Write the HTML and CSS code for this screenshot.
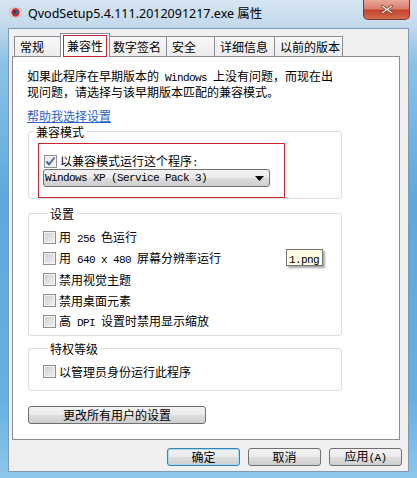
FILE: index.html
```html
<!DOCTYPE html>
<html>
<head>
<meta charset="UTF-8">
<title>QvodSetup5.4.111.2012091217.exe 属性</title>
<link rel="stylesheet" href="styles.css">
</head>
<body>

<div class="window">
	<div class="titlebar">
		<svg class="appicon" width="15" height="14" viewBox="0 0 15 14">
			<path d="M2 3 Q7 0 13 3 L13 10 Q7 13 2 10 Z" fill="#f4f0ee" stroke="#b9b2ae" stroke-width="0.8"/>
			<circle cx="7.5" cy="6.5" r="4.2" fill="#d8242c"/>
			<circle cx="7.5" cy="6.5" r="2.3" fill="#1d5fa8"/>
			<circle cx="7" cy="6" r="0.9" fill="#0b1c3a"/>
		</svg>
		<div class="title">QvodSetup5.4.111.2012091217.exe 属性</div>
		<div class="close">
			<svg width="14" height="11" viewBox="0 0 14 11">
				<path d="M2 1 L7 4.3 L12 1 L13 2.4 L8.8 5.5 L13 8.6 L12 10 L7 6.7 L2 10 L1 8.6 L5.2 5.5 L1 2.4 Z" fill="#fff" stroke="#6b2a20" stroke-width="0.8"/>
			</svg>
		</div>
	</div>

	<div class="client">
		<div class="tabs">
			<div class="tab t1">常规</div>
			<div class="tab active"><span class="mark">兼容性</span></div>
			<div class="tab t3">数字签名</div>
			<div class="tab t4">安全</div>
			<div class="tab t5">详细信息</div>
			<div class="tab t6">以前的版本</div>
		</div>

		<div class="panel">
			<p class="intro">如果此程序在早期版本的<span class="en"> Windows </span>上没有问题，而现在出<br>现问题，请选择与该早期版本匹配的兼容模式。</p>
			<a class="help">帮助我选择设置</a>

			<fieldset class="group g1">
				<legend>兼容模式</legend>
				<div class="redbox">
					<div class="row">
						<span class="check checked">
							<svg width="11" height="11" viewBox="0 0 11 11"><path d="M1.5 5.5 L4 8.5 L9.5 1.5" fill="none" stroke="#4d6aa6" stroke-width="2"/></svg>
						</span>
						<span>以兼容模式运行这个程序<span class="en">:</span></span>
					</div>
					<div class="combo">
						<span class="en">Windows XP (Service Pack 3)</span>
						<svg class="arrow" width="9" height="5" viewBox="0 0 9 5"><path d="M0 0 L9 0 L4.5 5 Z" fill="#000"/></svg>
					</div>
				</div>
			</fieldset>

			<fieldset class="group g2">
				<legend>设置</legend>
				<div class="row"><span class="check"></span><span>用<span class="en"> 256 </span>色运行</span></div>
				<div class="row"><span class="check"></span><span>用<span class="en"> 640 x 480 </span>屏幕分辨率运行</span></div>
				<div class="row"><span class="check"></span><span>禁用视觉主题</span></div>
				<div class="row"><span class="check"></span><span>禁用桌面元素</span></div>
				<div class="row"><span class="check"></span><span>高<span class="en"> DPI </span>设置时禁用显示缩放</span></div>
				<div class="tooltip"><span class="en">1.png</span></div>
			</fieldset>

			<fieldset class="group g3">
				<legend>特权等级</legend>
				<div class="row"><span class="check"></span><span>以管理员身份运行此程序</span></div>
			</fieldset>

			<button class="btn wide">更改所有用户的设置</button>
		</div>

		<div class="actions">
			<button class="btn default">确定</button>
			<button class="btn">取消</button>
			<button class="btn">应用<span class="en">(A)</span></button>
		</div>
	</div>
</div>

</body>
</html>
```

FILE: styles.css
```css
body{
	margin: 0;
	font-family: "Noto Sans CJK SC", "Noto Sans", sans-serif;
	font-size: 12px;
	color: #000;
}
.en{
	font-family: "Liberation Mono", "Noto Sans CJK SC", monospace;
	font-size: 11px;
	letter-spacing: -0.6px;
	white-space: pre;
}

.window{
	width: 417px;
	height: 478px;
	box-sizing: border-box;
	padding: 0 8px 6px 8px;
	background: linear-gradient(to bottom, #d6e5f2 0px, #c3d9ec 26px, #8cc3e6 60px, #5aaade 200px, #64b2e2 400px, #8ec7ea 478px);
	display: flex;
	flex-direction: column;
}

/* title bar */
.titlebar{
	height: 28px;
	display: flex;
	align-items: flex-start;
}
.appicon{
	margin-top: 6px;
	margin-right: 5px;
}
.title{
	font-family: "Noto Sans", "Noto Sans CJK SC", sans-serif;
	font-size: 12.5px;
	line-height: 14px;
	margin-top: 7px;
	color: #000;
}
.close{
	margin-left: auto;
	margin-right: -1px;
	width: 47px;
	height: 20px;
	box-sizing: border-box;
	border: 1px solid #7a3a30;
	border-top: none;
	border-radius: 0 0 5px 5px;
	background: linear-gradient(to bottom, #e9a99b 0%, #d9806c 45%, #c4442c 55%, #d26a4f 100%);
	display: flex;
	align-items: center;
	justify-content: center;
}

/* client */
.client{
	flex: 1;
	background: #f0f0f0;
	border: 1px solid #7d9bb6;
	padding: 4px 8px 0 3px;
}
.tabs{
	display: flex;
	height: 23px;
	margin-left: 2px;
	align-items: flex-end;
	position: relative;
	z-index: 1;
}
.tab{
	height: 20px;
	box-sizing: border-box;
	border: 1px solid #898c95;
	border-bottom: none;
	background: linear-gradient(to bottom, #f8f8f8, #ececec);
	padding: 3px 0 0 5px;
	line-height: 14px;
	margin-left: -1px;
}
.t1{ width: 48px; margin-left: 0; }
.t3{ width: 60px; }
.t4{ width: 49px; }
.t5{ width: 61px; }
.t6{ width: 69px; }
.tab.active{
	width: 50px;
	height: 24px;
	margin: 0 -2px 0 -2px;
	background: #fff;
	padding: 1px 0 0 2px;
	position: relative;
	z-index: 2;
	margin-bottom: -1px;
}
.mark{
	display: inline-block;
	border: 1px solid #c9252c;
	padding: 1px 3px 2px 3px;
	line-height: 17px;
}

.panel{
	background: #fff;
	border: 1px solid #898c95;
	padding: 12px 0 15px 14px;
}
.intro{
	margin: 0;
	line-height: 13px;
}
.help{
	display: block;
	margin-top: 11px;
	line-height: 13px;
	color: #2b63c5;
	text-decoration: underline;
	width: max-content;
}

.group{
	width: 314px;
	box-sizing: border-box;
	margin: 3px 0 0 1px;
	padding: 0;
	border: 1px solid #d5dfe5;
	border-radius: 3px;
}
.group legend{
	margin-left: 5px;
	padding: 0 2px;
	line-height: 13px;
}
.g2{
	margin-top: 8px;
	padding: 11px 0 7px 14px;
	position: relative;
}
.g3{
	margin-top: 6px;
	padding: 10px 0 12px 14px;
}

.row{
	display: flex;
	align-items: center;
	height: 13px;
	line-height: 13px;
	white-space: nowrap;
}
.g2 .row + .row{
	margin-top: 8px;
}
.check{
	width: 13px;
	height: 13px;
	box-sizing: border-box;
	border: 1px solid #8e8f8f;
	background: linear-gradient(135deg, #cdcdcd, #f2f2f2);
	box-shadow: inset 0 0 0 1px #f4f4f4;
	margin-right: 3px;
	flex: none;
	display: flex;
	align-items: center;
	justify-content: center;
}
.check.checked{
	background: linear-gradient(135deg, #e6e6e6, #fbfbfb);
}

.redbox{
	margin: 5px 0 0 9px;
	width: 247px;
	height: 55px;
	box-sizing: border-box;
	border: 1px solid #c9252c;
	padding: 11px 0 0 5px;
}
.combo{
	margin: 1px 0 0 -1px;
	width: 227px;
	height: 18px;
	box-sizing: border-box;
	border: 1px solid #707070;
	border-radius: 3px;
	background: linear-gradient(to bottom, #f3f3f3 0%, #ebebeb 50%, #dcdcdc 51%, #cfcfcf 100%);
	display: flex;
	align-items: center;
	padding-left: 1px;
}
.combo .arrow{
	margin-left: auto;
	margin-right: 5px;
}

.tooltip{
	position: absolute;
	left: 257px;
	top: 29px;
	width: 37px;
	height: 17px;
	box-sizing: border-box;
	border: 1px solid #767676;
	background: #ffffe1;
	box-shadow: 2px 2px 2px rgba(0,0,0,0.35);
	padding-left: 2px;
	line-height: 15px;
}

.btn{
	font-family: "Noto Sans CJK SC", sans-serif;
	font-size: 12px;
	height: 18px;
	box-sizing: border-box;
	border: 1px solid #707070;
	border-radius: 3px;
	background: linear-gradient(to bottom, #f2f2f2 0%, #ebebeb 50%, #dddddd 51%, #cfcfcf 100%);
	padding: 0;
	line-height: 14px;
	color: #000;
}
.wide{
	display: block;
	width: 178px;
	margin: 15px 0 0 1px;
}
.actions{
	display: flex;
	justify-content: flex-end;
	gap: 8px;
	margin: 8px -2px 0 0;
}
.actions .btn{
	width: 73px;
}
.btn.default{
	border-color: #3c7fb1;
	box-shadow: inset 0 0 0 1px #a7dcf5;
}
```
